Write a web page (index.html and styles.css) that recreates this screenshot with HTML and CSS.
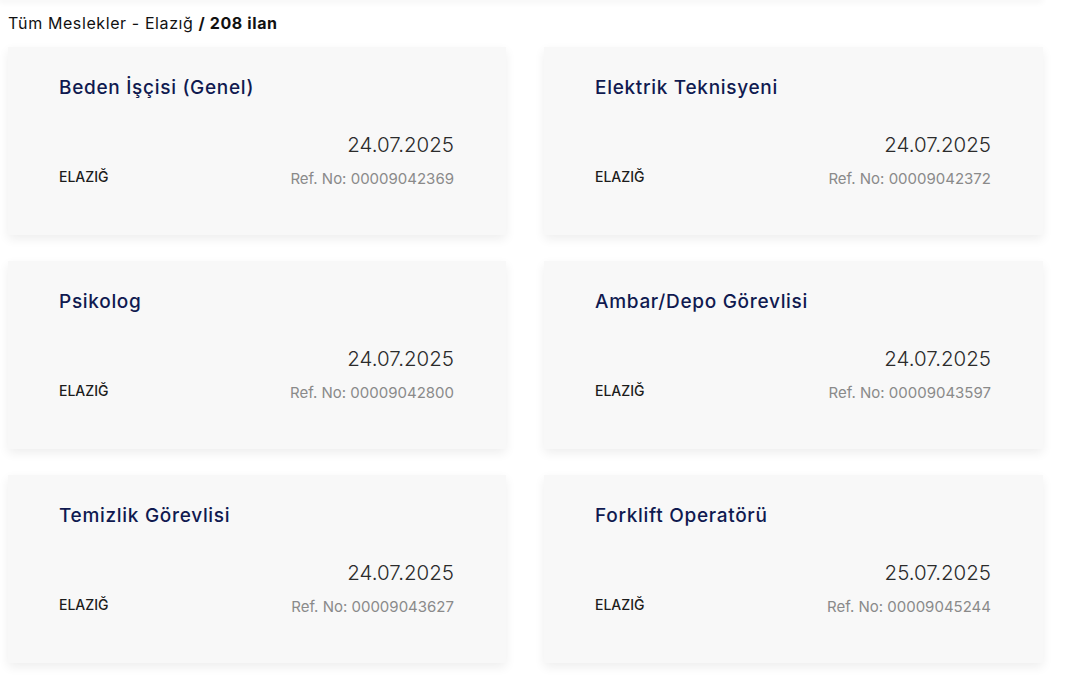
FILE: index.html
```html
<!DOCTYPE html>
<html lang="tr">
<head>
  <meta charset="UTF-8">
  <meta name="viewport" content="width=device-width, initial-scale=1.0">
  <title>İş İlanları - Elazığ</title>
<link rel="stylesheet" href="styles.css">
</head>
<body>
  <div class="top-shade"></div>

  <div class="results">
    <h2 class="results-title">Tüm Meslekler - Elazığ <span class="count">/ 208 ilan</span></h2>

    <div class="job-grid">
      <div class="job-card">
        <h3 class="job-name">Beden İşçisi (Genel)</h3>
        <div class="job-meta">
          <span class="job-city">ELAZIĞ</span>
          <div class="job-info">
            <span class="job-date">24.07.2025</span>
            <span class="job-ref">Ref. No: 00009042369</span>
          </div>
        </div>
      </div>

      <div class="job-card">
        <h3 class="job-name">Elektrik Teknisyeni</h3>
        <div class="job-meta">
          <span class="job-city">ELAZIĞ</span>
          <div class="job-info">
            <span class="job-date">24.07.2025</span>
            <span class="job-ref">Ref. No: 00009042372</span>
          </div>
        </div>
      </div>

      <div class="job-card">
        <h3 class="job-name">Psikolog</h3>
        <div class="job-meta">
          <span class="job-city">ELAZIĞ</span>
          <div class="job-info">
            <span class="job-date">24.07.2025</span>
            <span class="job-ref">Ref. No: 00009042800</span>
          </div>
        </div>
      </div>

      <div class="job-card">
        <h3 class="job-name">Ambar/Depo Görevlisi</h3>
        <div class="job-meta">
          <span class="job-city">ELAZIĞ</span>
          <div class="job-info">
            <span class="job-date">24.07.2025</span>
            <span class="job-ref">Ref. No: 00009043597</span>
          </div>
        </div>
      </div>

      <div class="job-card">
        <h3 class="job-name">Temizlik Görevlisi</h3>
        <div class="job-meta">
          <span class="job-city">ELAZIĞ</span>
          <div class="job-info">
            <span class="job-date">24.07.2025</span>
            <span class="job-ref">Ref. No: 00009043627</span>
          </div>
        </div>
      </div>

      <div class="job-card">
        <h3 class="job-name">Forklift Operatörü</h3>
        <div class="job-meta">
          <span class="job-city">ELAZIĞ</span>
          <div class="job-info">
            <span class="job-date">25.07.2025</span>
            <span class="job-ref">Ref. No: 00009045244</span>
          </div>
        </div>
      </div>
    </div>
  </div>
</body>
</html>
```

FILE: styles.css
```css
body {
  margin: 0;
  padding: 0;
  background-color: #fff;
  font-family: "Inter", "Open Sans", sans-serif;
  color: #111;
}

/* faint shadow left by the search bar above the list */
.top-shade {
  height: 0;
  margin: 0 24px 0 0;
  box-shadow: 0 0 6px 2px rgba(0, 0, 0, 0.06);
}

.results {
  padding: 11px 0 30px 8px;
}

.results-title {
  margin: 0 0 11px 0;
  font-size: 16px;
  font-weight: 400;
  line-height: 25px;
  letter-spacing: 0.6px;
  color: #111;
}

.results-title .count {
  font-weight: 700;
}

.job-grid {
  display: grid;
  grid-template-columns: 498px 499px;
  column-gap: 38px;
  row-gap: 26px;
}

.job-card {
  height: 188px;
  box-sizing: border-box;
  padding: 28px 52px 0 51px;
  background-color: #f8f8f8;
  box-shadow: 0 4px 10px rgba(0, 0, 0, 0.07);
}

.job-name {
  margin: 0;
  font-size: 19px;
  font-weight: 500;
  line-height: 26px;
  letter-spacing: 0.7px;
  color: #101a50;
}

.job-meta {
  display: flex;
  justify-content: space-between;
  align-items: flex-end;
  margin-top: 30px;
}

.job-city {
  font-size: 14px;
  font-weight: 500;
  color: #1c1c1c;
  padding-bottom: 4px;
}

.job-info {
  display: flex;
  flex-direction: column;
  align-items: flex-end;
}

.job-date {
  font-size: 20.5px;
  font-weight: 300;
  line-height: 28px;
  color: #2b2b2b;
}

.job-ref {
  margin-top: 10px;
  font-size: 15px;
  line-height: 20px;
  color: #8a8a8a;
}
```
